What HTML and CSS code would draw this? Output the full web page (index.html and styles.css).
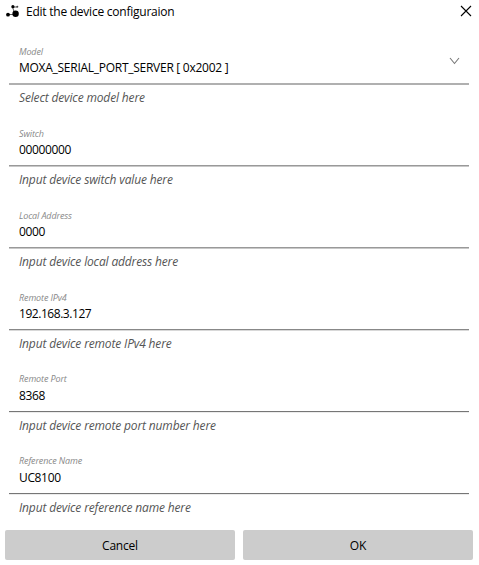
FILE: index.html
```html
<!DOCTYPE html>
<html lang="en">
<head>
<meta charset="utf-8">
<title>Edit the device configuraion</title>
<link rel="stylesheet" href="styles.css">
</head>
<body>
<header class="titlebar">
  <svg class="logo" width="14" height="14" viewBox="0 0 14 14"><path d="M2 10.500H9L6.500 3H11" fill="none" stroke="#333" stroke-width=".8"/><circle cx="2" cy="10.700" r="1.900"/><circle cx="9.600" cy="9.800" r="3.200"/><circle cx="6.900" cy="2.700" r="1.600"/><circle cx="11.300" cy="2.800" r="1" fill="#444"/></svg>
  <h1 class="title">Edit the device configuraion</h1>
  <svg class="close" width="12" height="12" viewBox="0 0 12 12"><path d="M1 1L11 11M11 1L1 11" stroke="#000" stroke-width="1.100"/></svg>
</header>
<main class="form">
  <section class="field">
    <div class="box soft">
      <div><div class="label">Model</div><div class="value model">MOXA_SERIAL_PORT_SERVER [ 0x2002 ]</div></div>
      <svg class="chevron" width="11" height="8" viewBox="0 0 11 8"><path d="M1 1L5.500 6.500L10 1" fill="none" stroke="#777" stroke-width="1.100"/></svg>
    </div>
    <div class="hint">Select device model here</div>
  </section>
  <section class="field">
    <div class="box medium"><div><div class="label">Switch</div><div class="value">00000000</div></div></div>
    <div class="hint">Input device switch value here</div>
  </section>
  <section class="field">
    <div class="box medium"><div><div class="label">Local Address</div><div class="value">0000</div></div></div>
    <div class="hint">Input device local address here</div>
  </section>
  <section class="field">
    <div class="box firm"><div><div class="label">Remote IPv4</div><div class="value address">192.168.3.127</div></div></div>
    <div class="hint">Input device remote IPv4 here</div>
  </section>
  <section class="field">
    <div class="box"><div><div class="label raised">Remote Port</div><div class="value">8368</div></div></div>
    <div class="hint">Input device remote port number here</div>
  </section>
  <section class="field">
    <div class="box"><div><div class="label raised">Reference Name</div><div class="value">UC8100</div></div></div>
    <div class="hint">Input device reference name here</div>
  </section>
</main>
<footer class="actions"><button class="button">Cancel</button><button class="button">OK</button></footer>
</body>
</html>
```
FILE: styles.css
```css
* { box-sizing: border-box; }
body {
  margin: 0;
  width: 479px;
  height: 565px;
  overflow: hidden;
  background: #fff;
  color: #000;
  font: 12px/16px "Open Sans", "Noto Sans", sans-serif;
}
.titlebar { display: flex; height: 36px; padding: 4px 7px 0 6px; }
.logo { margin-right: 6px; }
.title { margin: 0; font-size: 12px; font-weight: 400; line-height: 16px; letter-spacing: -0.24px; }
.close { margin: 1px 0 0 auto; }
.form { padding: 0 10px 0 9px; }
.field { height: 82px; }
.box {
  display: flex;
  justify-content: space-between;
  height: 48px;
  padding: 10px 9px 0 10px;
  border-bottom: 1px solid #767676;
  box-shadow: 0 1px #ececec;
}
.soft { border-color: #b0b0b0; box-shadow: 0 1px #b0b0b0; }
.medium { border-color: #999; box-shadow: 0 1px #c8c8c8; }
.firm { border-color: #888; box-shadow: 0 1px #d8d8d8; }
.label { height: 14px; color: #888; font-size: 9px; font-style: italic; line-height: 12px; letter-spacing: -0.12px; }
.raised { margin-top: -1px; height: 15px; }
.value { letter-spacing: -0.35px; }
.model { letter-spacing: -0.27px; }
.address { letter-spacing: -0.45px; }
.chevron { margin-top: 11px; }
.hint { padding: 6px 10px 0; color: #555; font-style: italic; letter-spacing: -0.15px; }
.actions { display: grid; grid-template-columns: 230px 230px; gap: 8px; padding: 2px 5px 0; }
.button {
  height: 30px;
  padding: 1px 0 0;
  border: 0;
  border-radius: 2px;
  background: #ccc;
  color: #000;
  font: inherit;
  letter-spacing: -0.2px;
}
```
